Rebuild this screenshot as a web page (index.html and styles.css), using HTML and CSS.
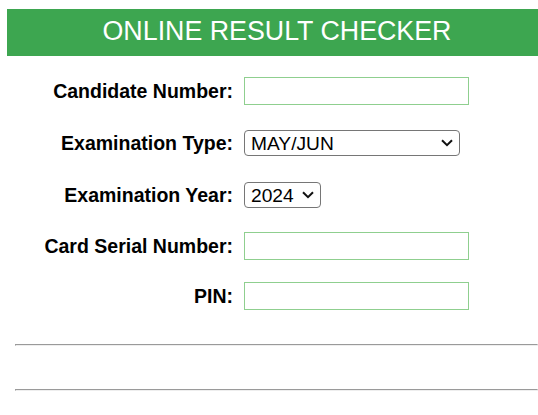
FILE: index.html
```html
<!DOCTYPE html>
<html lang="en">
<head>
  <meta charset="UTF-8" />
  <title>Online Result Checker</title>
  <meta name="viewport" content="width=device-width, initial-scale=1.0" />
  <link rel="stylesheet" href="styles.css">
</head>
<body>
  <div class="header">ONLINE RESULT CHECKER</div>

  <form class="checker">
    <label for="candidate">Candidate Number:</label>
    <input type="text" id="candidate" class="field">

    <label for="examType">Examination Type:</label>
    <span class="select-wrap type-select">
      <select id="examType">
        <option>MAY/JUN</option>
        <option>NOV/DEC</option>
      </select>
      <svg class="chevron" width="12" height="8" viewBox="0 0 12 8"><path d="M1 1.2 L6 6.2 L11 1.2" fill="none" stroke="#111" stroke-width="2"/></svg>
    </span>

    <label for="examYear">Examination Year:</label>
    <span class="select-wrap year-select">
      <select id="examYear">
        <option>2024</option>
        <option>2023</option>
        <option>2022</option>
      </select>
      <svg class="chevron" width="12" height="8" viewBox="0 0 12 8"><path d="M1 1.2 L6 6.2 L11 1.2" fill="none" stroke="#111" stroke-width="2"/></svg>
    </span>

    <label for="serial">Card Serial Number:</label>
    <input type="text" id="serial" class="field">

    <label for="pin">PIN:</label>
    <input type="password" id="pin" class="field">
  </form>

  <hr class="rule first">
  <hr class="rule">
</body>
</html>
```

FILE: styles.css
```css
body {
  font-family: "Liberation Sans", Arial, sans-serif;
  color: #000;
  background: #fff;
  margin: 0;
  padding: 0;
}

.header {
  margin: 9px 0 0 7px;
  height: 45px;
  line-height: 45px;
  padding: 0 0 2px 9px;
  background-color: #3da650;
  color: #fff;
  font-size: 26.8px;
  text-align: center;
}

.checker {
  display: grid;
  grid-template-columns: 233px auto;
  grid-template-rows: 52px 52px 52px 50px 50px;
  column-gap: 11px;
  align-items: center;
  justify-items: start;
  margin-top: 9px;
}

.checker label {
  justify-self: end;
  font-size: 19.5px;
  font-weight: bold;
}

.field {
  box-sizing: border-box;
  width: 225px;
  height: 28px;
  padding: 2px 4px;
  font-family: inherit;
  font-size: 19.2px;
  border: 1px solid #8fcf8f;
  outline: none;
}

.select-wrap {
  position: relative;
  display: inline-block;
}

.select-wrap select {
  -webkit-appearance: none;
  appearance: none;
  box-sizing: border-box;
  width: 100%;
  height: 26px;
  padding: 0 24px 0 6px;
  font-family: inherit;
  font-size: 19.2px;
  color: #000;
  background: #fff;
  border: 1px solid #767676;
  border-radius: 4px;
  outline: none;
}

.chevron {
  position: absolute;
  right: 7px;
  top: 9px;
  pointer-events: none;
}

.type-select {
  width: 216px;
}

.year-select {
  width: 77px;
}

.rule {
  margin: 0 0 0 15px;
  border: 1px inset;
  color: gray;
}

.rule.first {
  margin-top: 23px;
  margin-bottom: 43px;
}
```
